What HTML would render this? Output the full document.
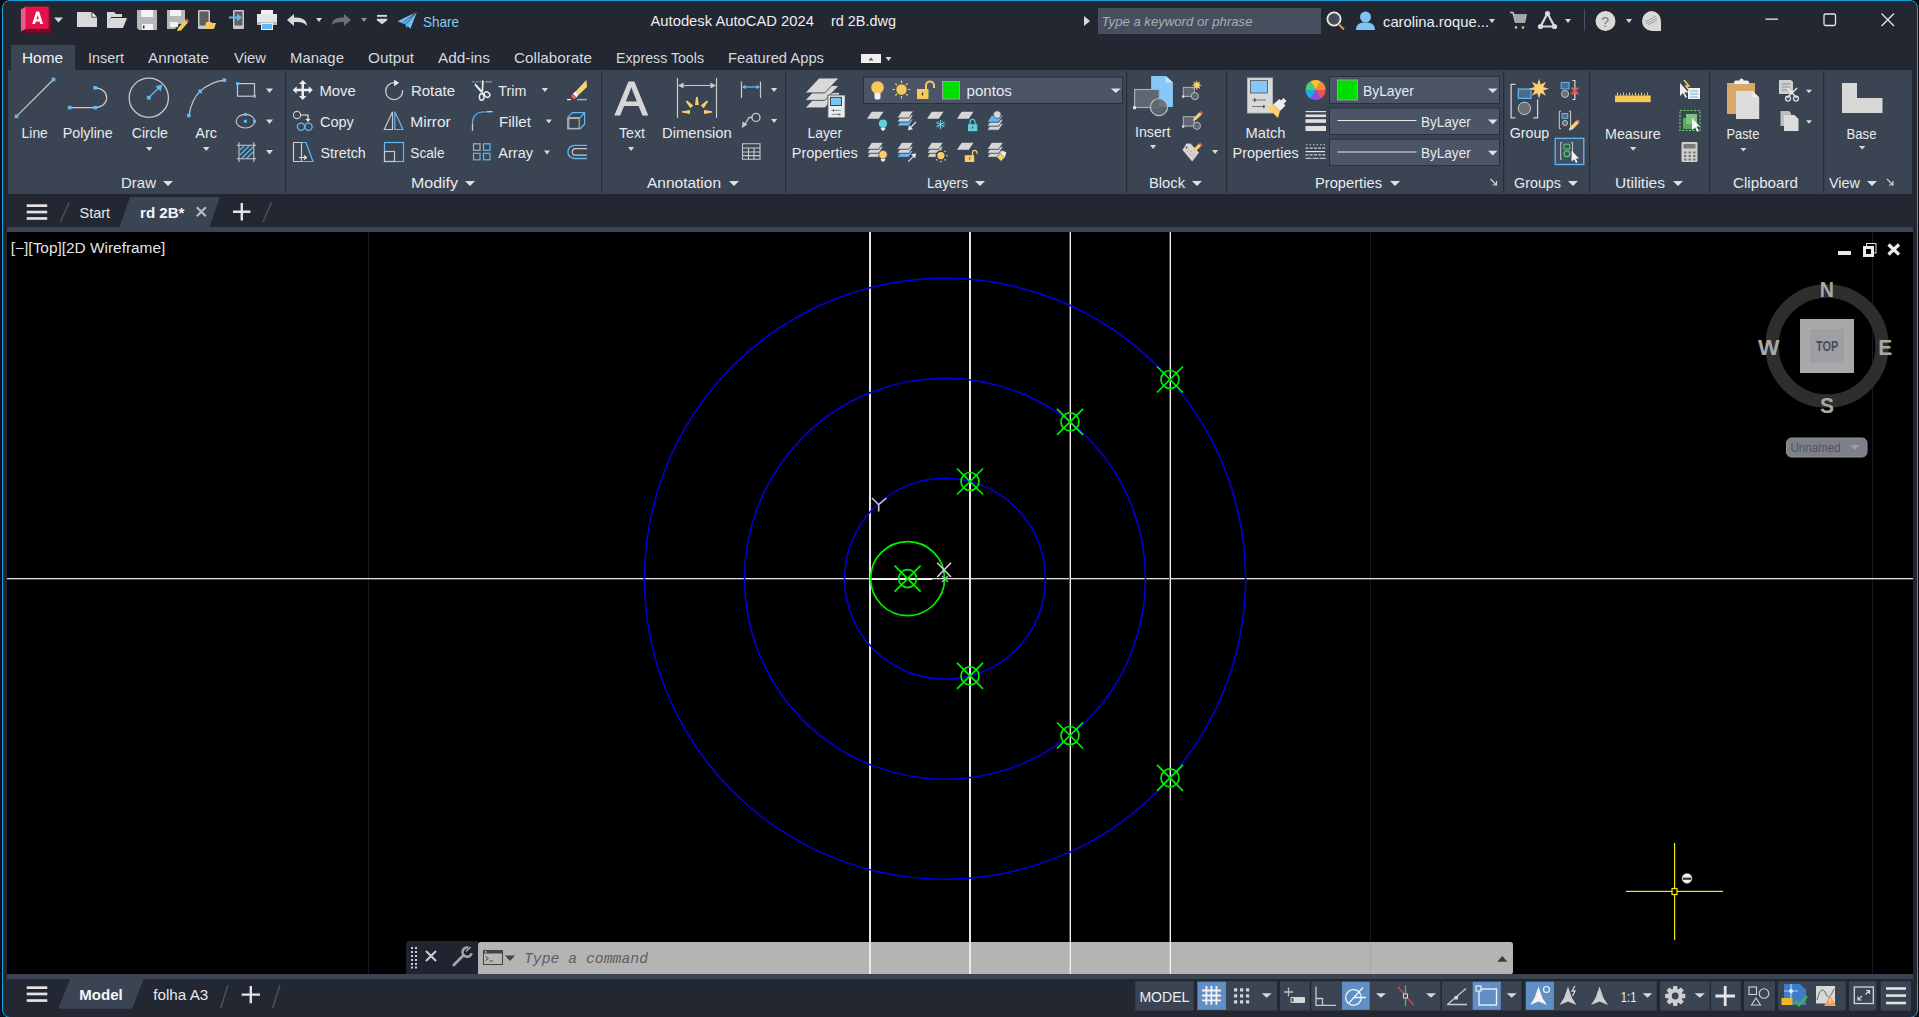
<!DOCTYPE html>
<html><head><meta charset="utf-8">
<style>
*{margin:0;padding:0;box-sizing:border-box}
html,body{width:1919px;height:1017px;overflow:hidden;background:#0b0f16;font-family:"Liberation Sans",sans-serif;}
.a{position:absolute}
.t{position:absolute;white-space:nowrap;color:#e6e9ee;font-size:14.5px;line-height:1}
.rb{position:absolute;background:#3b4453}
.vc{font-size:20px;font-weight:bold;color:#a6a6a6}
svg{position:absolute;left:0;top:0}
</style></head><body>

<div class="a" style="left:2px;top:0;width:1916px;height:1018px;background:#222731;border:1px solid #1b9ee0;border-radius:8px"></div>
<div class="rb" style="left:11px;top:45px;width:64px;height:26px"></div>
<div class="rb" style="left:8px;top:70px;width:1904px;height:124px"></div>
<div class="rb" style="left:7px;top:227px;width:1906px;height:5px"></div>
<div class="a" style="left:7px;top:232px;width:1906px;height:742px;background:#000"></div>
<div class="rb" style="left:7px;top:974px;width:1906px;height:5px"></div>

<!-- drawing -->
<svg class="a" style="left:0;top:0" width="1919" height="1017">
<defs><clipPath id="vp"><rect x="7" y="232" width="1906" height="742"/></clipPath></defs>
<g clip-path="url(#vp)">
<rect x="368" y="232" width="1" height="742" fill="#161a21"/>
<rect x="1370" y="232" width="1" height="742" fill="#161a21"/>
<rect x="1872" y="232" width="1" height="742" fill="#161a21"/>
<rect x="7" y="578" width="1906" height="1" fill="#dcdcdc"/>
<rect x="7" y="579" width="1906" height="1" fill="#4a4a4a"/>
<rect x="870" y="578" width="62" height="2" fill="#f0f0f0"/>
<rect x="869" y="232" width="2" height="742" fill="#e6e6e6"/>
<rect x="969" y="232" width="2" height="742" fill="#e6e6e6"/>
<rect x="1069" y="232" width="1" height="742" fill="#5a5a5a"/><rect x="1070" y="232" width="1" height="742" fill="#ececec"/>
<rect x="1169" y="232" width="1" height="742" fill="#5a5a5a"/><rect x="1170" y="232" width="1" height="742" fill="#ececec"/>
<circle cx="945" cy="578.7" r="100.4" fill="none" stroke="#0000e4" stroke-width="1.5"/>
<circle cx="945" cy="578.7" r="200.5" fill="none" stroke="#0000e4" stroke-width="1.5"/>
<circle cx="945" cy="578.7" r="300.5" fill="none" stroke="#0000e4" stroke-width="1.5"/>
<circle cx="907.6" cy="578.6" r="37" fill="none" stroke="#00f000" stroke-width="1.7"/>
<circle cx="907.6" cy="578.6" r="9" fill="none" stroke="#00f000" stroke-width="1.7"/>
<path d="M894.6 565.6L920.6 591.6M894.6 591.6L920.6 565.6" stroke="#00f000" stroke-width="1.7"/>
<circle cx="970.0" cy="481.5" r="9" fill="none" stroke="#00f000" stroke-width="1.7"/>
<path d="M957.0 468.5L983.0 494.5M957.0 494.5L983.0 468.5" stroke="#00f000" stroke-width="1.7"/>
<circle cx="970.0" cy="675.9" r="9" fill="none" stroke="#00f000" stroke-width="1.7"/>
<path d="M957.0 662.9L983.0 688.9M957.0 688.9L983.0 662.9" stroke="#00f000" stroke-width="1.7"/>
<circle cx="1070.0" cy="421.9" r="9" fill="none" stroke="#00f000" stroke-width="1.7"/>
<path d="M1057.0 408.9L1083.0 434.9M1057.0 434.9L1083.0 408.9" stroke="#00f000" stroke-width="1.7"/>
<circle cx="1070.0" cy="735.5" r="9" fill="none" stroke="#00f000" stroke-width="1.7"/>
<path d="M1057.0 722.5L1083.0 748.5M1057.0 748.5L1083.0 722.5" stroke="#00f000" stroke-width="1.7"/>
<circle cx="1170.0" cy="379.5" r="9" fill="none" stroke="#00f000" stroke-width="1.7"/>
<path d="M1157.0 366.5L1183.0 392.5M1157.0 392.5L1183.0 366.5" stroke="#00f000" stroke-width="1.7"/>
<circle cx="1170.0" cy="777.9" r="9" fill="none" stroke="#00f000" stroke-width="1.7"/>
<path d="M1157.0 764.9L1183.0 790.9M1157.0 790.9L1183.0 764.9" stroke="#00f000" stroke-width="1.7"/>
<path d="M872 498L878.7 504.7L886.5 498M878.7 504.7V511.6" stroke="#c4c4c4" stroke-width="1.6" fill="none"/>
<path d="M937.2 562.8L951 577M951 562.8L937.2 577" stroke="#d4d4d4" stroke-width="1.6" fill="none"/>
<path d="M942 576L948 582M948 576L942 582" stroke="#8fd08f" stroke-width="1.2" fill="none"/>
<rect x="1626" y="890.8" width="97" height="1.2" fill="#f0f000"/>
<rect x="1674" y="843" width="1.2" height="97" fill="#f0f000"/>
<rect x="1672" y="888.5" width="5" height="6" fill="#000" stroke="#f0f000" stroke-width="1.2"/>
<circle cx="1687" cy="878.4" r="5" fill="#f4f4f4" stroke="#888" stroke-width="0.6"/>
<rect x="1683" y="877.6" width="8" height="2.2" fill="#333"/>
<rect x="1838" y="251" width="13" height="4" fill="#e8e8e8"/>
<rect x="1866.5" y="243.5" width="9.5" height="9.5" fill="none" stroke="#e0e0e0" stroke-width="1"/>
<rect x="1864.5" y="247.5" width="8" height="8" fill="#000" stroke="#ececec" stroke-width="3"/>
<path d="M1888.5 244.5L1899 254.5M1899 244.5L1888.5 254.5" stroke="#ececec" stroke-width="3.2"/>
<circle cx="1827" cy="346" r="55" fill="none" stroke="#2e2e2e" stroke-width="13.4"/>
<rect x="1800" y="319" width="54" height="54" fill="#a9a9a9"/>
<rect x="1810" y="329" width="34" height="34" fill="#9d9fa4"/>
</g>
</svg>

<svg width="1919" height="1017">
<path d="M20.9 9.4L25.8 6.6V28.9L20.9 31.6Z" fill="#ea5c88"/>
<path d="M23.9 32.7L25.8 28.9H48.7V11.2H50.9V32.7Z" fill="#7a0a28"/>
<rect x="25.8" y="6.6" width="22.9" height="22.3" fill="#e5104c"/>
<path d="M32.2 24.1L36.2 11.5H39.1L43.1 24.1H40.2L39.5 21.6H35.8L35.1 24.1ZM36.5 19.2H38.8L37.65 15.1Z" fill="#fff"/>
<path d="M54 17.5h9l-4.5 5z" fill="#d9d9d9"/>
<path d="M77 12H91.5V17.5H97V27H77Z" fill="#d9d9d9"/><path d="M92.3 12.2L96.8 16.7H92.3Z" fill="#f4f4f4"/>
<path d="M107 12H114L116 14H122V17H111L108 28H107Z" fill="#d9d9d9"/><path d="M111 18H127L123 28H107Z" fill="#d9d9d9"/>
<path d="M137 10H157V30H139L137 28Z" fill="#b8b8b8"/><rect x="141" y="10" width="12" height="7" fill="#f2f2f2"/><rect x="142" y="24" width="11" height="6" fill="#f2f2f2"/><rect x="143" y="25.5" width="1.5" height="3" fill="#333"/>
<path d="M167 10H185V24H179L175 29H167Z" fill="#b8b8b8"/><rect x="170" y="10" width="11" height="6" fill="#f2f2f2"/><rect x="170" y="22" width="8" height="5" fill="#f2f2f2"/>
<path d="M178 28L185 20L188 22.5L181 30.5L177 31Z" fill="#f6c95c"/><path d="M185 20L186.5 18.5L189 21L188 22.5Z" fill="#e25c5c"/>
<rect x="198" y="10" width="12" height="19" rx="1" fill="#c8c8c8"/><rect x="199.5" y="11.5" width="9" height="14" fill="#5f5f5f"/>
<path d="M206 22H211L212 23H216L214 29H205Z" fill="#f6c95c"/>
<rect x="233" y="10" width="11" height="19" rx="1" fill="#c8c8c8"/><rect x="234.5" y="11.5" width="8" height="14" fill="#5f5f5f"/>
<path d="M229 16.5H237V13.5L242 17.5L237 21.5V18.5H229Z" fill="#62b8f2"/>
<rect x="261" y="10" width="12" height="5" fill="#f0f0f0"/><path d="M257 14H277V25H257Z" fill="#e6e6e6"/><rect x="257" y="22" width="20" height="3" fill="#bdbdbd"/>
<rect x="261" y="23" width="12" height="7" fill="#f0f0f0"/><rect x="262" y="24" width="10" height="5" fill="#62b8f2"/>
<path d="M287 20L294 14V17.5C301 17.5 307 19 307 26C304 22 300 22 294 22V26Z" fill="#d9d9d9"/>
<path d="M316 18h6l-3.0 4z" fill="#d9d9d9"/>
<path d="M351 20L344 14V17.5C337 17.5 332 19 332 25C335 22 339 22 344 22V26Z" fill="#6b6f78"/>
<path d="M361 18h6l-3.0 4z" fill="#8b8f96"/>
<rect x="377" y="14.9" width="10" height="1.9" fill="#d9d9d9"/><path d="M376.8 18.8H387.2V20.3L382 24.2L376.8 20.3Z" fill="#d9d9d9"/>
<path d="M397.5 21.2L417 11.8L410.5 28.8L405.3 24.3Z" fill="#6cc0f4"/><path d="M405.3 24.3L417 11.8L406.5 28Z" fill="#5fb2ea"/><path d="M403 22.5L417 11.8M405.3 24.3L417 11.8" stroke="#222731" stroke-width="0.7"/>
<path d="M1084 16V26L1090 21Z" fill="#d8d8d8"/>
<rect x="1098" y="8" width="223" height="26" fill="#474f5f"/>
<circle cx="1334" cy="19" r="6.6" fill="#474d57" stroke="#ececec" stroke-width="1.8"/><path d="M1338.5 24L1344 29.5" stroke="#d29a5a" stroke-width="2"/>
<circle cx="1365.5" cy="17" r="5.5" fill="#7cc4f4"/><path d="M1356 30C1356 24 1360 22.5 1365.5 22.5C1371 22.5 1375 24 1375 30Z" fill="#7cc4f4"/>
<path d="M1489 19h6l-3.0 4z" fill="#d9d9d9"/>
<path d="M1510 12.5H1513L1515.5 22H1524.5L1526 15H1514" fill="none" stroke="#c9c9c9" stroke-width="1.5"/><path d="M1514 15H1526L1524.5 22H1515.5Z" fill="#a6a6a6"/><circle cx="1516" cy="27.5" r="1.3" fill="#c9c9c9"/><circle cx="1523" cy="27.5" r="1.3" fill="#c9c9c9"/>
<path d="M1547.5 13.5L1540.5 26.5H1554.5Z" fill="none" stroke="#d9d9d9" stroke-width="2.2"/><circle cx="1547.5" cy="13.5" r="2.6" fill="#d9d9d9"/><circle cx="1540.5" cy="26.5" r="2.6" fill="#d9d9d9"/><circle cx="1554.5" cy="26.5" r="2.6" fill="#d9d9d9"/>
<path d="M1565 19h6l-3.0 4z" fill="#d9d9d9"/>
<rect x="1584" y="9" width="1" height="22" fill="#4a5260"/>
<circle cx="1605.5" cy="21" r="10" fill="#d9d9d9"/><text x="1601.2" y="26.5" font-size="14" font-family="Liberation Sans" fill="#7b7e84">?</text>
<path d="M1626 19h6l-3.0 4z" fill="#d9d9d9"/>
<path d="M1652 11A10 10 0 1 0 1652 31H1661V21A10 10 0 0 0 1652 11Z" fill="#d9d9d9"/><path d="M1645 22L1656 16M1646 24L1657 18M1648 25L1657 20" stroke="#9a9a9a" stroke-width="0.9"/>
<rect x="1765.5" y="18.5" width="12.5" height="1.3" fill="#e8e8e8"/>
<rect x="1824" y="14" width="11.5" height="11.5" rx="1.5" fill="none" stroke="#e8e8e8" stroke-width="1.3"/>
<path d="M1881.5 13.5L1894 26M1894 13.5L1881.5 26" stroke="#e8e8e8" stroke-width="1.3"/>
<rect x="861" y="54" width="20" height="9" fill="#f0f0f0"/><path d="M868.5 60.5L871 57.5L873.5 60.5Z" fill="#555"/>
<path d="M885.5 57h6l-3.0 4z" fill="#d9d9d9"/>
<rect x="285" y="71" width="1.2" height="122" fill="#272d37"/>
<rect x="601" y="71" width="1.2" height="122" fill="#272d37"/>
<rect x="785" y="71" width="1.2" height="122" fill="#272d37"/>
<rect x="1126" y="71" width="1.2" height="122" fill="#272d37"/>
<rect x="1226" y="71" width="1.2" height="122" fill="#272d37"/>
<rect x="1503" y="71" width="1.2" height="122" fill="#272d37"/>
<rect x="1589" y="71" width="1.2" height="122" fill="#272d37"/>
<rect x="1709" y="71" width="1.2" height="122" fill="#272d37"/>
<rect x="1823" y="71" width="1.2" height="122" fill="#272d37"/>
<path d="M163 181h10l-5.0 5z" fill="#dfe1e5"/>
<path d="M465 181h10l-5.0 5z" fill="#dfe1e5"/>
<path d="M729 181h10l-5.0 5z" fill="#dfe1e5"/>
<path d="M975 181h10l-5.0 5z" fill="#dfe1e5"/>
<path d="M1192 181h10l-5.0 5z" fill="#dfe1e5"/>
<path d="M1390 181h10l-5.0 5z" fill="#dfe1e5"/>
<path d="M1568 181h10l-5.0 5z" fill="#dfe1e5"/>
<path d="M1673 181h10l-5.0 5z" fill="#dfe1e5"/>
<path d="M1867 181h10l-5.0 5z" fill="#dfe1e5"/>
<path d="M1490.5 179L1496.5 185M1496.5 181V185H1492.5" stroke="#cfd2d6" stroke-width="1.2" fill="none"/>
<path d="M1887 179L1893 185M1893 181V185H1889" stroke="#cfd2d6" stroke-width="1.2" fill="none"/>
<path d="M16.5 116.4L53.5 79.5" stroke="#c9c9c9" stroke-width="1.2"/><rect x="14.70" y="114.60" width="3.6" height="3.6" fill="#62b8f2"/><rect x="51.70" y="77.70" width="3.6" height="3.6" fill="#62b8f2"/>
<path d="M69.6 107.6H95.2M95.2 87.8A11.5 9.9 0 0 1 95.2 107.6" stroke="#c9c9c9" stroke-width="1.2" fill="none"/><rect x="67.80" y="105.80" width="3.6" height="3.6" fill="#62b8f2"/><rect x="93.40" y="105.80" width="3.6" height="3.6" fill="#62b8f2"/><rect x="93.40" y="86.00" width="3.6" height="3.6" fill="#62b8f2"/>
<circle cx="148.8" cy="97.7" r="19.6" fill="none" stroke="#c9c9c9" stroke-width="1.3"/><path d="M148.8 97.7L159 87.5" stroke="#62b8f2" stroke-width="1.3"/><path d="M162.3 84.6L155.5 86.2L160.7 91.4Z" fill="#62b8f2"/><rect x="147.00" y="95.90" width="3.6" height="3.6" fill="#62b8f2"/>
<path d="M146 147h6.5l-3.25 4z" fill="#d9d9d9"/>
<path d="M188.9 115.5C191 104 195 96 200.1 91.4C206 86 214 81.5 224.4 80.2" stroke="#c9c9c9" stroke-width="1.2" fill="none"/><rect x="187.10" y="113.70" width="3.6" height="3.6" fill="#62b8f2"/><rect x="198.30" y="89.60" width="3.6" height="3.6" fill="#62b8f2"/><rect x="222.60" y="78.40" width="3.6" height="3.6" fill="#62b8f2"/>
<path d="M203 147h6.5l-3.25 4z" fill="#d9d9d9"/>
<rect x="237.5" y="83.6" width="17" height="12.6" fill="none" stroke="#c9c9c9" stroke-width="1.2"/><rect x="236.00" y="82.10" width="3" height="3" fill="#62b8f2"/><rect x="253.00" y="94.70" width="3" height="3" fill="#62b8f2"/>
<path d="M266 88.5h7l-3.5 4.5z" fill="#d9d9d9"/>
<ellipse cx="245.4" cy="121.2" rx="9.2" ry="6.8" fill="none" stroke="#c9c9c9" stroke-width="1.2"/><rect x="243.90" y="119.70" width="3" height="3" fill="#62b8f2"/><rect x="243.90" y="112.90" width="3" height="3" fill="#62b8f2"/><rect x="253.10" y="119.70" width="3" height="3" fill="#62b8f2"/>
<path d="M266 119.5h7l-3.5 4.5z" fill="#d9d9d9"/>
<path d="M236.8 145.2H256M236.8 158.8H256M239 142.2V162M253.8 142.2V162" stroke="#c9c9c9" stroke-width="1.1"/><path d="M240 150L245 145M240 155L250 145M242 158L253 147M247 158L253 152" stroke="#62b8f2" stroke-width="1.3"/>
<path d="M266 150h7l-3.5 4.5z" fill="#d9d9d9"/>
<path d="M302.75 80L306.5 84H304V88.8H308.8V86.2L312.75 90L308.8 93.8V91.2H304V96H306.5L302.75 100L299 96H301.5V91.2H296.7V93.8L292.75 90L296.7 86.2V88.8H301.5V84H299Z" fill="#ececec"/>
<path d="M402.6 90A8.5 8.5 0 1 1 394.2 82.6" stroke="#c9c9c9" stroke-width="1.3" fill="none"/><path d="M394 79.8L399.2 82.8L394.2 86.2Z" fill="#ececec"/>
<path d="M472 81.8H474.5M475.8 81.8H478.3M479.5 81.8H481" stroke="#4f95cc" stroke-width="1.6"/><path d="M485 81.8H492" stroke="#8a8f98" stroke-width="1.4"/><path d="M482 80L483.8 81L483.2 91.6L481.6 92Z" fill="#ececec"/><path d="M475 83L482.5 91L481 92.8L474.8 85.5Z" fill="#ececec"/><ellipse cx="481.7" cy="97" rx="2.3" ry="3.2" fill="none" stroke="#ececec" stroke-width="1.5"/><ellipse cx="487" cy="94.6" rx="3" ry="2.4" transform="rotate(35 487 94.6)" fill="none" stroke="#ececec" stroke-width="1.5"/><path d="M482 92L484 96" stroke="#ececec" stroke-width="1.6"/>
<path d="M541.7 88h6.3l-3.15 4z" fill="#d9d9d9"/>
<path d="M586.4 79.9L587 87L578.5 95L575.5 91.4Z" fill="#fbd47a"/><path d="M575.5 91.4L578.5 95L576.3 97.4L573 93.6Z" fill="#fff"/><path d="M573 93.6L576.3 97.4L574 99.4L571 96.2Z" fill="#f46060"/><path d="M567 99.6H571" stroke="#e8e8e8" stroke-width="1.4"/><path d="M577 99.6H587" stroke="#6cc0f6" stroke-width="1.4"/>
<circle cx="297" cy="115" r="3.6" fill="none" stroke="#c9c9c9" stroke-width="1.2"/><path d="M301 115H308V120" stroke="#ececec" stroke-width="1.2" fill="none"/><path d="M305.5 119H310.5L308 122Z" fill="#ececec"/><circle cx="301" cy="126.8" r="3.6" fill="none" stroke="#62b8f2" stroke-width="1.3"/><circle cx="308.5" cy="126.8" r="3.6" fill="none" stroke="#62b8f2" stroke-width="1.3"/>
<path d="M392.5 111.7V129.5H384.3Z" fill="none" stroke="#c9c9c9" stroke-width="1.2"/><path d="M394.8 111.7V129.5H403Z" fill="none" stroke="#62b8f2" stroke-width="1.2"/>
<path d="M472.5 130.7V122A10 10 0 0 1 482 112H492.5" stroke="#62b8f2" stroke-width="1.2" fill="none"/><path d="M472.5 130.7V124M487 111.5H492.5" stroke="#c9c9c9" stroke-width="1.2"/>
<path d="M545.8 119.5h6l-3.0 4z" fill="#d9d9d9"/>
<path d="M567.6 117.6L572.2 112.6H584.6L580 117.6ZM580 117.6L584.6 112.6V124L580 129" stroke="#62b8f2" stroke-width="1.2" fill="none" stroke-linejoin="round"/><path d="M567.6 117.6V129H580" stroke="#62b8f2" stroke-width="1.2" fill="none"/><rect x="568.8" y="118.4" width="10.4" height="10" fill="none" stroke="#b8b8b8" stroke-width="1.1"/>
<path d="M293.5 142.5H301.5V161.5H293.5Z" stroke="#c9c9c9" stroke-width="1.2" fill="none"/><path d="M301.5 142.5H306L313 161.5H301.5" stroke="#62b8f2" stroke-width="1.2" fill="none"/><path d="M299 157.5H306M304 155.5L306.5 157.5L304 159.5" stroke="#ececec" stroke-width="1.1" fill="none"/>
<rect x="384.5" y="142.5" width="19" height="19" fill="none" stroke="#62b8f2" stroke-width="1.2"/><rect x="384.5" y="151.5" width="10" height="10" fill="none" stroke="#c9c9c9" stroke-width="1.2"/>
<rect x="473.5" y="143.8" width="6.5" height="6.5" fill="none" stroke="#b0b0b0" stroke-width="1.2"/><rect x="483.5" y="143.8" width="6.5" height="6.5" fill="none" stroke="#62b8f2" stroke-width="1.2"/><rect x="473.5" y="153.3" width="6.5" height="6.5" fill="none" stroke="#62b8f2" stroke-width="1.2"/><rect x="483.5" y="153.3" width="6.5" height="6.5" fill="none" stroke="#62b8f2" stroke-width="1.2"/>
<path d="M544 150.5h6l-3.0 4z" fill="#d9d9d9"/>
<path d="M587 145.3H574.5A6.6 6.6 0 0 0 574.5 158.5H587" stroke="#62b8f2" stroke-width="1.3" fill="none"/><path d="M587 148.6H575.6A3.3 3.3 0 0 0 575.6 155.2H587" stroke="#c8c8c8" stroke-width="1.2" fill="none"/>
<text x="615" y="115.3" font-size="48.7" font-family="Liberation Sans" fill="#d6d6d6" stroke="#d6d6d6" stroke-width="1" textLength="32.6" lengthAdjust="spacingAndGlyphs">A</text>
<path d="M628 147h6.2l-3.1 4z" fill="#d9d9d9"/>
<path d="M677.5 78V118M716.5 78V118M680 85.5H714" stroke="#c9c9c9" stroke-width="1.2" fill="none"/><path d="M678 85.5L683.5 82.5V88.5ZM716 85.5L710.5 82.5V88.5Z" fill="#c9c9c9"/>
<path d="M696 96.9H697.8L698.8 105H695Z M685.8 101.6L687.2 100.6L693.2 105.6L690.4 108.2Z M708.2 101.6L706.8 100.6L700.8 105.6L703.6 108.2Z M681.8 111.3V112.6L690 113.9V110Z M712.2 111.3V112.6L704 113.9V110Z" fill="#f8cd66"/>
<path d="M741.5 81.5V98M760.5 81.5V98" stroke="#c9c9c9" stroke-width="1.2"/><path d="M743 87H759" stroke="#62b8f2" stroke-width="1.3"/><path d="M742 87L745.5 84.8V89.2ZM760 87L756.5 84.8V89.2Z" fill="#62b8f2"/>
<path d="M771 88h6.2l-3.1 4z" fill="#d9d9d9"/>
<circle cx="756" cy="117.4" r="4" fill="none" stroke="#c9c9c9" stroke-width="1.3"/><path d="M752 117.5H749L744.5 125" stroke="#c9c9c9" stroke-width="1.3" fill="none"/><path d="M741.8 128L742.5 121.5L747.5 124.5Z" fill="#c9c9c9"/>
<path d="M771 119h6.2l-3.1 4z" fill="#d9d9d9"/>
<path d="M742.5 143.8H760V159.2H742.5ZM742.5 148H760M742.5 152H760M742.5 155.6H760M748.5 148V159.2M754 148V159.2" stroke="#c9c9c9" stroke-width="1.1" fill="none"/>
<path d="M819.1 93H839L824.8 107.9H805Z" fill="#d9d9d9" stroke="#3b4453" stroke-width="0.9"/>
<path d="M819.1 85.5H839L824.8 100.4H805Z" fill="#d9d9d9" stroke="#3b4453" stroke-width="0.9"/>
<path d="M819.1 78H839L824.8 92.9H805Z" fill="#d9d9d9" stroke="#3b4453" stroke-width="0.9"/>
<rect x="833" y="92.9" width="6" height="2.5" fill="#d9d9d9"/><rect x="827.9" y="95" width="17.2" height="22.9" fill="#ececec" stroke="#3b4453" stroke-width="0.8"/><rect x="830.4" y="97.3" width="11" height="8.2" fill="#78c4f8" stroke="#2a3038" stroke-width="0.9"/><path d="M831.5 110.4H841M831.5 114.4H841" stroke="#777" stroke-width="0.8"/><rect x="833" y="109.3" width="1" height="2.2" fill="#555"/><rect x="838.5" y="113.3" width="1" height="2.2" fill="#555"/>
<rect x="863.5" y="77.0" width="259" height="26.5" fill="#4b5567" stroke="#2a303a" stroke-width="1"/>
<circle cx="877.5" cy="87.5" r="6.3" fill="#f6c95c"/><path d="M874.5 93H880.5V97.5A3 2 0 0 1 874.5 97.5Z" fill="#f0f0f0"/>
<circle cx="901.5" cy="89.5" r="5.2" fill="#f6c95c"/><path d="M901.5 80.5V83M901.5 96V98.5M892.5 89.5H895M908 89.5H910.5M895.3 83.3L897 85M906 94L907.7 95.7M907.7 83.3L906 85M897 94L895.3 95.7" stroke="#f6c95c" stroke-width="1.2"/>
<rect x="917" y="89" width="11.5" height="10" fill="#f6c95c"/><path d="M926 89V85.5A4 4 0 0 1 934 85.5V88" stroke="#f6c95c" stroke-width="2" fill="none"/><rect x="921.8" y="92.5" width="1.4" height="3" fill="#3b4453"/>
<rect x="942.5" y="81.5" width="17" height="17.5" fill="#00e000" stroke="#9aa0a8" stroke-width="1"/>
<path d="M1110.8 88.5h10l-5.0 4.6z" fill="#dfe1e5"/>
<path d="M871.70 111.80H883.50L878.80 118.80H867.00Z" fill="#d6d6d6"/>
<circle cx="883" cy="123.5" r="4.1" fill="#5fd0dc"/><path d="M880.8 127.5H885.2V129.2L883 131L880.8 129.2Z" fill="#eeeeee"/>
<path d="M901.70 119.00H913.50L908.80 126.00H897.00Z" fill="#62b8f2" stroke="#3b4453" stroke-width="0.9"/><path d="M901.70 115.00H913.50L908.80 122.00H897.00Z" fill="#d6d6d6" stroke="#3b4453" stroke-width="0.9"/><path d="M901.70 111.00H913.50L908.80 118.00H897.00Z" fill="#d6d6d6" stroke="#3b4453" stroke-width="0.9"/>
<path d="M916 122L909.5 128.5" stroke="#e8e8e8" stroke-width="1.1"/><path d="M908 130.3L909 125.2L913 129.2Z" fill="#e8e8e8"/>
<path d="M931.70 111.80H943.50L938.80 118.80H927.00Z" fill="#d6d6d6"/>
<path d="M940.5 120V129M936.6 122.2L944.4 126.8M944.4 122.2L936.6 126.8" stroke="#5fd0dc" stroke-width="1.1"/><circle cx="940.5" cy="124.5" r="3.6" fill="none" stroke="#5fd0dc" stroke-width="0.8" stroke-dasharray="1 1.3"/>
<path d="M961.70 111.80H973.50L968.80 118.80H957.00Z" fill="#d6d6d6"/>
<rect x="968" y="124.2" width="9.3" height="7" fill="#5fd0dc"/><path d="M970.2 124.5V121.8A2.4 2.4 0 0 1 975 121.8V124.5" stroke="#5fd0dc" stroke-width="1.2" fill="none"/><rect x="972.2" y="126.2" width="0.9" height="2.5" fill="#3b4453"/>
<path d="M991.70 123.20H1003.50L998.80 130.20H987.00Z" fill="#d6d6d6" stroke="#3b4453" stroke-width="0.9"/><path d="M991.70 119.20H1003.50L998.80 126.20H987.00Z" fill="#d6d6d6" stroke="#3b4453" stroke-width="0.9"/><path d="M991.70 115.20H1003.50L998.80 122.20H987.00Z" fill="#62b8f2" stroke="#3b4453" stroke-width="0.9"/><circle cx="997.2" cy="114.6" r="3.9" fill="#d6d6d6" stroke="#3b4453" stroke-width="0.8"/>
<path d="M871.70 150.30H883.50L878.80 157.30H867.00Z" fill="#d6d6d6" stroke="#3b4453" stroke-width="0.9"/><path d="M871.70 146.30H883.50L878.80 153.30H867.00Z" fill="#d6d6d6" stroke="#3b4453" stroke-width="0.9"/><path d="M871.70 142.30H883.50L878.80 149.30H867.00Z" fill="#d6d6d6" stroke="#3b4453" stroke-width="0.9"/>
<circle cx="883" cy="154.6" r="4.3" fill="#f8cd6a" stroke="#3b4453" stroke-width="0.8"/><path d="M880.8 158.8H885.2V160.3L883 162L880.8 160.3Z" fill="#eeeeee"/>
<path d="M901.70 150.30H913.50L908.80 157.30H897.00Z" fill="#62b8f2" stroke="#3b4453" stroke-width="0.9"/><path d="M901.70 146.30H913.50L908.80 153.30H897.00Z" fill="#d6d6d6" stroke="#3b4453" stroke-width="0.9"/><path d="M901.70 142.30H913.50L908.80 149.30H897.00Z" fill="#d6d6d6" stroke="#3b4453" stroke-width="0.9"/>
<path d="M908.2 161.6L914.5 155.3" stroke="#e8e8e8" stroke-width="1.1"/><path d="M916 153.3L915.2 158.6L911 154.3Z" fill="#e8e8e8"/>
<path d="M931.70 150.30H943.50L938.80 157.30H927.00Z" fill="#d6d6d6" stroke="#3b4453" stroke-width="0.9"/><path d="M931.70 146.30H943.50L938.80 153.30H927.00Z" fill="#d6d6d6" stroke="#3b4453" stroke-width="0.9"/><path d="M931.70 142.30H943.50L938.80 149.30H927.00Z" fill="#d6d6d6" stroke="#3b4453" stroke-width="0.9"/>
<circle cx="940.9" cy="155.6" r="5.5" fill="#3b4453"/><circle cx="940.9" cy="155.6" r="3.6" fill="#f8cd6a"/><rect x="946.90" y="155.60" width="1.4" height="1.4" transform="translate(-0.7 -0.7)" fill="#f8cd6a"/><rect x="945.14" y="159.84" width="1.4" height="1.4" transform="translate(-0.7 -0.7)" fill="#f8cd6a"/><rect x="940.90" y="161.60" width="1.4" height="1.4" transform="translate(-0.7 -0.7)" fill="#f8cd6a"/><rect x="936.66" y="159.84" width="1.4" height="1.4" transform="translate(-0.7 -0.7)" fill="#f8cd6a"/><rect x="934.90" y="155.60" width="1.4" height="1.4" transform="translate(-0.7 -0.7)" fill="#f8cd6a"/><rect x="936.66" y="151.36" width="1.4" height="1.4" transform="translate(-0.7 -0.7)" fill="#f8cd6a"/><rect x="940.90" y="149.60" width="1.4" height="1.4" transform="translate(-0.7 -0.7)" fill="#f8cd6a"/><rect x="945.14" y="151.36" width="1.4" height="1.4" transform="translate(-0.7 -0.7)" fill="#f8cd6a"/>
<path d="M961.70 142.70H973.50L968.80 149.70H957.00Z" fill="#d6d6d6"/>
<rect x="964.8" y="155.2" width="9.4" height="6.8" fill="#f8cd6a"/><path d="M972.5 155.5V152.6A2.2 2.2 0 0 1 976.9 152.6V154" stroke="#f8cd6a" stroke-width="1.2" fill="none"/><rect x="969.2" y="157.2" width="0.9" height="2.5" fill="#3b4453"/>
<path d="M991.70 150.30H1003.50L998.80 157.30H987.00Z" fill="#d6d6d6" stroke="#3b4453" stroke-width="0.9"/><path d="M991.70 146.30H1003.50L998.80 153.30H987.00Z" fill="#d6d6d6" stroke="#3b4453" stroke-width="0.9"/><path d="M991.70 142.30H1003.50L998.80 149.30H987.00Z" fill="#d6d6d6" stroke="#3b4453" stroke-width="0.9"/>
<path d="M996.6 157L1000.5 153.2L1004.8 157.5L1001 161.4Z" fill="#f8cd6a" stroke="#3b4453" stroke-width="0.6"/><path d="M1000.5 153.2L1003 150.7L1006.3 152.6L1004.8 157.5Z" fill="#eeeeee"/>
<path d="M1151.1 76H1165.8L1172.9 82.4V107H1151.1Z" fill="#86c8f8"/><path d="M1165.8 76V82.4H1172.9Z" fill="#c8e4f8"/>
<rect x="1134.6" y="89.5" width="24.6" height="18" fill="#5f6672" stroke="#a8acb2" stroke-width="1.2"/><circle cx="1159" cy="107.1" r="8.6" fill="#5f6672" fill-opacity="0.85" stroke="#b8bcc2" stroke-width="1.2"/><rect x="1133" y="106.2" width="3" height="3" fill="#e0e0e0"/>
<path d="M1150 145h6.2l-3.1 4z" fill="#d9d9d9"/>
<rect x="1183.3" y="87.4" width="11" height="9" fill="#5f6672" stroke="#b0b4ba" stroke-width="1"/><circle cx="1194.9" cy="96.1" r="3.6" fill="#5f6672" stroke="#b8bcc2" stroke-width="1"/><rect x="1182" y="95.5" width="2.2" height="2.2" fill="#e0e0e0"/>
<path d="M1196.80 80.00L1197.72 82.98L1200.48 81.52L1199.02 84.28L1202.00 85.20L1199.02 86.12L1200.48 88.88L1197.72 87.42L1196.80 90.40L1195.88 87.42L1193.12 88.88L1194.58 86.12L1191.60 85.20L1194.58 84.28L1193.12 81.52L1195.88 82.98Z" fill="#fbd070"/>
<rect x="1183.3" y="116.7" width="11" height="9.4" fill="#5f6672" stroke="#b0b4ba" stroke-width="1"/><circle cx="1196.9" cy="125.8" r="3.6" fill="#5f6672" stroke="#b8bcc2" stroke-width="1"/><rect x="1182" y="125.5" width="2.2" height="2.2" fill="#e0e0e0"/>
<path d="M1192.8 121L1194 117.5L1199.5 112.2L1201.8 114.5L1196.3 119.8Z" fill="#fbd070"/><path d="M1199.5 112.2L1200.8 111L1203 113.2L1201.8 114.5Z" fill="#f05858"/>
<path d="M1182.5 150L1186.5 143.6H1190.5L1199 152.5L1192.2 161.4Z" fill="#d6d6d6"/><circle cx="1186.5" cy="147.5" r="1" fill="#555"/><path d="M1187 151L1193 157M1189 149.5L1195 155.5" stroke="#777" stroke-width="0.7" stroke-dasharray="1.2 1"/>
<path d="M1192.2 152.5L1193.4 149L1198.9 143.7L1201.2 146L1195.7 151.3Z" fill="#fbd070"/><path d="M1198.9 143.7L1200.2 142.5L1202.4 144.7L1201.2 146Z" fill="#f05858"/>
<path d="M1212 150h6.2l-3.1 4z" fill="#d9d9d9"/>
<rect x="1247.5" y="78" width="25" height="35" fill="#d9d9d9" stroke="#bdbdbd" stroke-width="0.8"/><rect x="1250.5" y="80.5" width="17" height="12.5" fill="#86c8f8" stroke="#555" stroke-width="0.8"/><path d="M1252 100H1266M1252 106.5H1265" stroke="#777" stroke-width="1"/><rect x="1254" y="98.5" width="1.6" height="3.2" fill="#555"/><rect x="1263" y="105" width="1.6" height="3.2" fill="#555"/>
<path d="M1273 104.5L1279.5 99L1285.5 105.5L1280 111Z" fill="#eeeeee"/><path d="M1280.5 101L1283.5 98L1286.5 101L1283.5 104Z" fill="#eeeeee"/><path d="M1266.5 107L1273 104.5L1280 111L1278 118Z" fill="#fbd070"/>
<path d="M1315.6 90L1310.60 81.34A10 10 0 0 1 1320.60 81.34Z" fill="#fbbf3a"/>
<path d="M1315.6 90L1320.60 81.34A10 10 0 0 1 1325.60 90.00Z" fill="#f98a3a"/>
<path d="M1315.6 90L1325.60 90.00A10 10 0 0 1 1320.60 98.66Z" fill="#e8505a"/>
<path d="M1315.6 90L1320.60 98.66A10 10 0 0 1 1310.60 98.66Z" fill="#8a4ef0"/>
<path d="M1315.6 90L1310.60 98.66A10 10 0 0 1 1305.60 90.00Z" fill="#20a8d8"/>
<path d="M1315.6 90L1305.60 90.00A10 10 0 0 1 1310.60 81.34Z" fill="#50c878"/>
<rect x="1305.5" y="111" width="20.5" height="1.2" fill="#e0e0e0"/><rect x="1305.5" y="114.5" width="20.5" height="2.6" fill="#e0e0e0"/><rect x="1305.5" y="119.2" width="20.5" height="3.6" fill="#e0e0e0"/><rect x="1305.5" y="126" width="20.5" height="5" fill="#e0e0e0"/>
<path d="M1306 144.7H1325" stroke="#cfcfcf" stroke-width="1.1" stroke-dasharray="1.5 2"/><path d="M1305.5 148.2H1325.5" stroke="#cfcfcf" stroke-width="1.3" stroke-dasharray="3 1.2"/><path d="M1305.5 151.6H1325" stroke="#e6e6e6" stroke-width="1.2"/><path d="M1305.5 154.8H1325.5" stroke="#cfcfcf" stroke-width="1.3" stroke-dasharray="3 1.2"/><path d="M1305.5 158.4H1325.5" stroke="#bdbdbd" stroke-width="1.3" stroke-dasharray="6 1"/>
<rect x="1329.5" y="76.5" width="170" height="27" fill="#4b5567" stroke="#2a303a" stroke-width="1"/><rect x="1329.5" y="108.0" width="170" height="26.5" fill="#4b5567" stroke="#2a303a" stroke-width="1"/><rect x="1329.5" y="139.0" width="170" height="26.5" fill="#4b5567" stroke="#2a303a" stroke-width="1"/>
<rect x="1337.5" y="80" width="20" height="20" fill="#00e000" stroke="#9aa0a8" stroke-width="1"/>
<rect x="1337.5" y="120" width="79" height="1" fill="#e8e8e8"/><rect x="1337.5" y="151.5" width="79" height="1" fill="#e8e8e8"/>
<path d="M1488 88.4h9.5l-4.75 4.6z" fill="#dfe1e5"/>
<path d="M1488 119.6h9.5l-4.75 4.6z" fill="#dfe1e5"/>
<path d="M1488 150.8h9.5l-4.75 4.6z" fill="#dfe1e5"/>
<path d="M1515.4 84.3H1511.1V117.8H1515.4M1537.6 99.4V117.8H1533.3" stroke="#d0d0d0" stroke-width="1.3" fill="none"/>
<rect x="1518.2" y="89" width="12.8" height="9.4" fill="#4a6a90" stroke="#62b8f2" stroke-width="1.2"/><circle cx="1524.4" cy="108.4" r="6.2" fill="#6b7078" stroke="#c8c8c8" stroke-width="1"/>
<path d="M1539.00 78.80L1540.76 84.55L1546.07 81.73L1543.25 87.04L1549.00 88.80L1543.25 90.56L1546.07 95.87L1540.76 93.05L1539.00 98.80L1537.24 93.05L1531.93 95.87L1534.75 90.56L1529.00 88.80L1534.75 87.04L1531.93 81.73L1537.24 84.55Z" fill="#fbd070"/>
<path d="M1572.5 80.5H1574.9V99.5H1572.5" stroke="#e0e0e0" stroke-width="1.1" fill="none"/><rect x="1561.2" y="82.4" width="7.8" height="6.4" fill="#4a6a90" stroke="#62b8f2" stroke-width="1"/><circle cx="1565" cy="93.9" r="3.6" fill="#6b7078" stroke="#c8c8c8" stroke-width="0.9"/><path d="M1571.6 87.6L1578.2 94.2M1578.2 87.6L1571.6 94.2" stroke="#f05050" stroke-width="2"/>
<path d="M1561 111.2H1559.3V128.7H1561M1569 111.2H1570.6V128.7H1569" stroke="#d0d0d0" stroke-width="1" fill="none"/><rect x="1562.1" y="113.5" width="5.7" height="4.8" fill="#4a6a90" stroke="#62b8f2" stroke-width="1"/><circle cx="1565" cy="123" r="2.6" fill="#6b7078" stroke="#c8c8c8" stroke-width="0.9"/>
<path d="M1569.2 130.6L1570.5 126.5L1576.5 120.5L1579 123L1573 129Z" fill="#fbd070"/><path d="M1576.5 120.5L1577.8 119.2L1580.3 121.7L1579 123Z" fill="#f05858"/><path d="M1569.2 130.6L1570.5 126.5L1573 129Z" fill="#d8d8d8"/>
<rect x="1555.2" y="138.3" width="28.6" height="26.2" fill="#3f5064" stroke="#62b8f2" stroke-width="1.3"/>
<path d="M1562 142.4H1560.7V159.3H1562M1571.2 142.4H1572.5V159.3H1571.2" stroke="#c8c8c8" stroke-width="1" fill="none"/><rect x="1564" y="144.2" width="5.7" height="4.8" fill="none" stroke="#58d068" stroke-width="1.1"/><circle cx="1566.9" cy="153.7" r="2.9" fill="none" stroke="#58d068" stroke-width="1.2"/><path d="M1571.6 150.5V161.5L1574.2 159.2L1576 163L1577.6 162.2L1575.8 158.5H1579Z" fill="#f2f2f2"/>
<rect x="1615" y="95.5" width="35.7" height="6.7" fill="#f6c95c"/><path d="M1617.5 95.5V92.5M1620.5 95.5V93.5M1623.5 95.5V92.5M1626.5 95.5V93.5M1629.5 95.5V92.5M1632.5 95.5V93.5M1635.5 95.5V92.5M1638.5 95.5V93.5M1641.5 95.5V92.5M1644.5 95.5V93.5M1647.5 95.5V92.5" stroke="#f6c95c" stroke-width="1"/>
<path d="M1630 147h6.4l-3.2 3.8z" fill="#d9d9d9"/>
<path d="M1680 83L1680 96L1683 93L1685.5 98L1687 97L1684.5 92.5H1688.5Z" fill="#eeeeee"/><rect x="1688" y="88" width="12" height="11" fill="#f0f0f0"/><path d="M1690 91H1698M1690 94H1698M1690 97H1698" stroke="#62b8f2" stroke-width="1.1"/><path d="M1684 80L1689 86H1686L1689 90" stroke="#f6c95c" stroke-width="1.5" fill="none"/>
<rect x="1680" y="110.5" width="20" height="20" fill="none" stroke="#6cd06c" stroke-width="1.2" stroke-dasharray="2 1.5"/><rect x="1683" y="118" width="12" height="11" fill="#5aa860"/><rect x="1686" y="114" width="11" height="10" fill="#7cc47c"/><path d="M1692 118V130L1695 127.5L1697.5 132L1699 131L1696.5 126.5H1700Z" fill="#f2f2f2"/>
<rect x="1681.5" y="142" width="16" height="20" rx="1" fill="#cfcfcf"/><rect x="1683.5" y="144" width="12" height="4.5" fill="#7a7a7a"/><path d="M1684 151.5h2.5v2h-2.5zM1688.5 151.5h2.5v2h-2.5zM1693 151.5h2.5v2h-2.5zM1684 155h2.5v2h-2.5zM1688.5 155h2.5v2h-2.5zM1693 155h2.5v2h-2.5zM1684 158.5h2.5v2h-2.5zM1688.5 158.5h2.5v2h-2.5zM1693 158.5h2.5v2h-2.5z" fill="#7a7a7a"/>
<rect x="1727" y="83" width="28" height="31" fill="#d8a868"/><path d="M1734 84V82.5A2 2 0 0 1 1736 80.5H1739.5A2 2 0 0 1 1743.5 80.5H1747A2 2 0 0 1 1749 82.5V84Z" fill="#eeeeee"/><path d="M1736 91H1752.5L1759.2 97.5V119H1736Z" fill="#dcdcdc"/><path d="M1752.5 91V97.5H1759.2Z" fill="#efefef"/>
<path d="M1740.4 148h6l-3.0 3.6z" fill="#d9d9d9"/>
<path d="M1779 80H1791L1793 82V94H1779Z" fill="#cfcfcf"/><path d="M1782 84H1790M1782 87H1790M1782 90H1788" stroke="#888" stroke-width="0.9"/>
<path d="M1787 88L1797 98M1797 88L1787 98" stroke="#f0f0f0" stroke-width="1.4"/><circle cx="1788" cy="98.5" r="2.5" fill="none" stroke="#f0f0f0" stroke-width="1.2"/><circle cx="1796" cy="98.5" r="2.5" fill="none" stroke="#f0f0f0" stroke-width="1.2"/>
<path d="M1806 89.7h6l-3.0 3.6z" fill="#d9d9d9"/>
<path d="M1780.5 111H1789L1791 113V126H1780.5Z" fill="#bdbdbd"/><path d="M1784 115H1794.5L1798.5 119V131H1784Z" fill="#dcdcdc"/>
<path d="M1806 120.2h6l-3.0 3.6z" fill="#d9d9d9"/>
<path d="M1842 83H1857V98H1882.5V113H1842Z" fill="#d8d8d8"/>
<path d="M1859 146h6.3l-3.15 3.6z" fill="#d9d9d9"/>
<rect x="26.7" y="204.3" width="20.500000000000004" height="2.7" fill="#e2e2e2"/><rect x="26.7" y="210.7" width="20.500000000000004" height="2.7" fill="#e2e2e2"/><rect x="26.7" y="217.1" width="20.500000000000004" height="2.7" fill="#e2e2e2"/>
<path d="M60.5 222L69 202.5" stroke="#4f5663" stroke-width="1.3"/>
<path d="M119.5 227L130 197H220L209.5 227Z" fill="#3b4453"/>
<path d="M196.8 207.2L205.8 216.2M205.8 207.2L196.8 216.2" stroke="#b7bbc1" stroke-width="2.2"/>
<path d="M241.8 203V220.5M233 211.8H250.5" stroke="#e4e4e4" stroke-width="2.4"/>
<path d="M263 222L271.5 202.5" stroke="#4f5663" stroke-width="1.3"/>
<rect x="26.7" y="986.3" width="20.599999999999998" height="2.7" fill="#e2e2e2"/><rect x="26.7" y="992.6" width="20.599999999999998" height="2.7" fill="#e2e2e2"/><rect x="26.7" y="999.2" width="20.599999999999998" height="2.7" fill="#e2e2e2"/>
<path d="M58.3 1008.7L70 979H143.8L132 1008.7Z" fill="#3b4453"/>
<path d="M220.7 1008L228 985" stroke="#4f5663" stroke-width="1.3"/>
<path d="M250.8 986V1003.3M241.7 994.6H260" stroke="#e4e4e4" stroke-width="2.4"/>
<path d="M272.7 1008L280 985" stroke="#4f5663" stroke-width="1.3"/>
<rect x="1135.2" y="981.2" width="58.4" height="29.3" fill="#3b4453"/>
<rect x="1197" y="981.2" width="80.0" height="29.3" fill="#3b4453"/>
<rect x="1280" y="981.2" width="29.7" height="29.3" fill="#3b4453"/>
<rect x="1311.3" y="981.2" width="129.2" height="29.3" fill="#3b4453"/>
<rect x="1442" y="981.2" width="79.4" height="29.3" fill="#3b4453"/>
<rect x="1525.7" y="981.2" width="131.1" height="29.3" fill="#3b4453"/>
<rect x="1660" y="981.2" width="49.6" height="29.3" fill="#3b4453"/>
<rect x="1710.8" y="981.2" width="30.0" height="29.3" fill="#3b4453"/>
<rect x="1744" y="981.2" width="31.0" height="29.3" fill="#3b4453"/>
<rect x="1777.8" y="981.2" width="68.0" height="29.3" fill="#3b4453"/>
<rect x="1848.9" y="981.2" width="27.6" height="29.3" fill="#3b4453"/>
<rect x="1880.7" y="981.2" width="30.3" height="29.3" fill="#3b4453"/>
<rect x="1197.5" y="981.8" width="28.5" height="28" fill="#5f8fc5"/>
<rect x="1342" y="981.8" width="27.7" height="28" fill="#5f8fc5"/>
<rect x="1472.7" y="981.8" width="28.1" height="28" fill="#5f8fc5"/>
<rect x="1525.8" y="981.8" width="28.1" height="28" fill="#5f8fc5"/>
<path d="M1206.4 986V1004.8M1211.4 986V1004.8M1216.4 986V1004.8M1202 990.5H1221M1202 995.5H1221M1202 1000.4H1221" stroke="#f4f4f4" stroke-width="1.8"/>
<rect x="1234" y="988.3" width="3.2" height="3.2" fill="#d6d6d6"/><rect x="1234" y="994.3" width="3.2" height="3.2" fill="#d6d6d6"/><rect x="1234" y="1000.3" width="3.2" height="3.2" fill="#d6d6d6"/><rect x="1240" y="988.3" width="3.2" height="3.2" fill="#d6d6d6"/><rect x="1240" y="994.3" width="3.2" height="3.2" fill="#d6d6d6"/><rect x="1240" y="1000.3" width="3.2" height="3.2" fill="#d6d6d6"/><rect x="1246" y="988.3" width="3.2" height="3.2" fill="#d6d6d6"/><rect x="1246" y="994.3" width="3.2" height="3.2" fill="#d6d6d6"/><rect x="1246" y="1000.3" width="3.2" height="3.2" fill="#d6d6d6"/>
<path d="M1261.7 993.3h10l-5.0 4.5z" fill="#d9d9d9"/>
<path d="M1288.5 987.5V996.5M1284 992H1293" stroke="#bdbdbd" stroke-width="1.3"/><rect x="1290.5" y="997" width="14.5" height="6" rx="1" fill="#d6d6d6"/><rect x="1291.5" y="998" width="2" height="4" fill="#555"/>
<path d="M1316 986.5V1005.3H1336M1316 998.5H1322.5V1005.3" stroke="#c8c8c8" stroke-width="1.3" fill="none"/>
<circle cx="1353.5" cy="997.5" r="7.8" fill="none" stroke="#f4f4f4" stroke-width="1.3"/><path d="M1349 1003L1363 987.5M1353.5 997.5H1366" stroke="#f4f4f4" stroke-width="1.3"/>
<path d="M1376 993.3h10l-5.0 4.5z" fill="#d9d9d9"/>
<path d="M1398 987L1413.5 1005" stroke="#e04848" stroke-width="1.3"/><path d="M1405.5 985.5V1006" stroke="#50c050" stroke-width="1.3"/><rect x="1403.5" y="994" width="4" height="4" fill="#3b4453" stroke="#d8d8d8" stroke-width="1"/>
<path d="M1426 993.3h10l-5.0 4.5z" fill="#d9d9d9"/>
<path d="M1447 1004.5H1467M1448 1004L1466 988.5" stroke="#c8c8c8" stroke-width="1.3"/><rect x="1454.5" y="996" width="3.5" height="3.5" fill="#d8d8d8"/>
<rect x="1479" y="989" width="17.5" height="16" fill="none" stroke="#f4f4f4" stroke-width="1.3"/><rect x="1476" y="986" width="5" height="5" fill="#5f8fc5" stroke="#f4f4f4" stroke-width="1.1"/>
<path d="M1506.7 993.3h10l-5.0 4.5z" fill="#d9d9d9"/>
<path d="M1538.5 986.5L1542.5 998L1547.0 1005L1538.5 1001.5L1530.0 1005L1534.5 998Z" fill="#f4f4f4"/><circle cx="1546.5" cy="989.5" r="3" fill="none" stroke="#f4f4f4" stroke-width="1.2"/>
<path d="M1568 986.5L1572 998L1576.5 1005L1568 1001.5L1559.5 1005L1564 998Z" fill="#cfcfcf"/><path d="M1575 986L1572 991H1575L1572.5 996" stroke="#cfcfcf" stroke-width="1.3" fill="none"/>
<path d="M1599.5 986.5L1603.5 998L1608.0 1005L1599.5 1001.5L1591.0 1005L1595.5 998Z" fill="#cfcfcf"/>
<path d="M1642.7 993.3h9.5l-4.75 4.5z" fill="#d9d9d9"/>
<path d="M1681.97 993.54L1685.31 994.03L1685.31 997.97L1681.97 998.46L1681.73 999.04L1683.74 1001.76L1680.96 1004.54L1678.24 1002.53L1677.66 1002.77L1677.17 1006.11L1673.23 1006.11L1672.74 1002.77L1672.16 1002.53L1669.44 1004.54L1666.66 1001.76L1668.67 999.04L1668.43 998.46L1665.09 997.97L1665.09 994.03L1668.43 993.54L1668.67 992.96L1666.66 990.24L1669.44 987.46L1672.16 989.47L1672.74 989.23L1673.23 985.89L1677.17 985.89L1677.66 989.23L1678.24 989.47L1680.96 987.46L1683.74 990.24L1681.73 992.96Z" fill="#cfcfcf"/><circle cx="1675.2" cy="996" r="3.4" fill="#3b4453"/>
<path d="M1694.6 993.3h10.4l-5.2 4.5z" fill="#d9d9d9"/>
<path d="M1725.2 986V1006M1715.4 996H1735" stroke="#e6e6e6" stroke-width="2.8"/>
<rect x="1749" y="987" width="7.5" height="7.5" fill="none" stroke="#d0d0d0" stroke-width="1.1"/><circle cx="1764" cy="993.5" r="4.8" fill="none" stroke="#d0d0d0" stroke-width="1.1"/><path d="M1756 998L1760.5 1005H1751.5Z" fill="none" stroke="#d0d0d0" stroke-width="1.1"/>
<path d="M1784 984H1800L1806 990V1005H1784Z" fill="#3f7cc8"/><path d="M1791 984V1000M1784 991H1798" stroke="#a8d4f8" stroke-width="1.2"/><circle cx="1791" cy="991" r="2" fill="#e8f4ff"/><rect x="1781.5" y="998" width="11" height="7" fill="#f0b828"/><path d="M1795 1001L1799 1005L1807 996" stroke="#40b050" stroke-width="2.6" fill="none"/>
<rect x="1816" y="986" width="19" height="17.5" fill="#d8d8d8"/><path d="M1817 1000C1820 989 1823 987 1826 994C1829 1001 1832 993 1834 989" stroke="#555" stroke-width="0.9" fill="none"/><path d="M1830 995L1836 1006H1824Z" fill="#f4a060"/><rect x="1829.6" y="999" width="0.9" height="4" fill="#fff"/>
<rect x="1854.3" y="987" width="19" height="16.5" fill="none" stroke="#d6d6d6" stroke-width="1.3"/><path d="M1858 1000L1862 996M1858 996.5V1000H1861.5M1869.5 990.5L1865.5 994.5M1866 990.5H1869.5V994" stroke="#d6d6d6" stroke-width="1.2" fill="none"/>
<rect x="1886" y="987.2" width="20" height="2.6" fill="#e2e2e2"/><rect x="1886" y="994.3" width="20" height="2.6" fill="#e2e2e2"/><rect x="1886" y="1001.7" width="20" height="2.6" fill="#e2e2e2"/>
<path d="M406 974V945A4 4 0 0 1 410 941H478V974Z" fill="#1f2430"/>
<path d="M478 974V944.5A2.5 2.5 0 0 1 480.5 942H1510.5A2.5 2.5 0 0 1 1513 944.5V972A2 2 0 0 1 1511 974H478Z" fill="#b4b4b4"/>
<rect x="411" y="947" width="2" height="2" fill="#cfcfcf"/><rect x="411" y="951" width="2" height="2" fill="#cfcfcf"/><rect x="411" y="955" width="2" height="2" fill="#cfcfcf"/><rect x="411" y="959" width="2" height="2" fill="#cfcfcf"/><rect x="411" y="963" width="2" height="2" fill="#cfcfcf"/><rect x="411" y="966.5" width="2" height="2" fill="#cfcfcf"/><rect x="415" y="947" width="2" height="2" fill="#cfcfcf"/><rect x="415" y="951" width="2" height="2" fill="#cfcfcf"/><rect x="415" y="955" width="2" height="2" fill="#cfcfcf"/><rect x="415" y="959" width="2" height="2" fill="#cfcfcf"/><rect x="415" y="963" width="2" height="2" fill="#cfcfcf"/><rect x="415" y="966.5" width="2" height="2" fill="#cfcfcf"/>
<path d="M426 951L436 961M436 951L426 961" stroke="#cfcfcf" stroke-width="2"/>
<path d="M453.8 965L463.5 955.3" stroke="#a4a4a4" stroke-width="2.8" stroke-linecap="round"/><path d="M468.2 947.6A4.6 4.6 0 1 0 471.6 953.2" stroke="#a4a4a4" stroke-width="2.6" fill="none"/><path d="M466 951.5L470.5 947" stroke="#a4a4a4" stroke-width="1.6"/>
<rect x="483.5" y="950.5" width="19" height="14" fill="#b8b8b8" stroke="#444" stroke-width="1"/><rect x="483.5" y="950.5" width="19" height="3" fill="#444"/><rect x="485" y="951.2" width="1.4" height="1.4" fill="#ddd"/><path d="M485.5 956.5L488.5 958.5L485.5 960.5M489.5 961H493" stroke="#444" stroke-width="0.9" fill="none"/>
<path d="M505 955.5h10l-5.0 5.5z" fill="#444"/>
<path d="M1497.3 961.7H1507.3L1502.3 956Z" fill="#3a3a3a"/>
<rect x="869" y="942.5" width="2" height="31.5" fill="#ececec"/>
<rect x="969" y="942.5" width="2" height="31.5" fill="#ececec"/>
<rect x="1069" y="942.5" width="1" height="31.5" fill="#c8c8c8"/><rect x="1070" y="942.5" width="1" height="31.5" fill="#f2f2f2"/>
<rect x="1169" y="942.5" width="1" height="31.5" fill="#c8c8c8"/><rect x="1170" y="942.5" width="1" height="31.5" fill="#f2f2f2"/>
<rect x="1370" y="942" width="1" height="32" fill="#a8a8a8"/>
<text x="423" y="27" textLength="36" lengthAdjust="spacingAndGlyphs" font-size="15" font-weight="normal" font-style="normal" fill="#8ccaf2" font-family='"Liberation Sans", sans-serif'>Share</text>
<text x="650.5" y="26" textLength="163.5" lengthAdjust="spacingAndGlyphs" font-size="14.5" font-weight="normal" font-style="normal" fill="#eceef1" font-family='"Liberation Sans", sans-serif'>Autodesk AutoCAD 2024</text>
<text x="831" y="26" textLength="65" lengthAdjust="spacingAndGlyphs" font-size="14.5" font-weight="normal" font-style="normal" fill="#eceef1" font-family='"Liberation Sans", sans-serif'>rd 2B.dwg</text>
<text x="1101.5" y="26" textLength="151" lengthAdjust="spacingAndGlyphs" font-size="13.5" font-weight="normal" font-style="italic" fill="#a9adb5" font-family='"Liberation Sans", sans-serif'>Type a keyword or phrase</text>
<text x="1383" y="26.5" textLength="106" lengthAdjust="spacingAndGlyphs" font-size="14.5" font-weight="normal" font-style="normal" fill="#eceef1" font-family='"Liberation Sans", sans-serif'>carolina.roque...</text>
<text x="22" y="63" textLength="41" lengthAdjust="spacingAndGlyphs" font-size="14.5" font-weight="normal" font-style="normal" fill="#f2f3f5" font-family='"Liberation Sans", sans-serif'>Home</text>
<text x="88" y="63" textLength="36" lengthAdjust="spacingAndGlyphs" font-size="14.5" font-weight="normal" font-style="normal" fill="#d4d8de" font-family='"Liberation Sans", sans-serif'>Insert</text>
<text x="148" y="63" textLength="61" lengthAdjust="spacingAndGlyphs" font-size="14.5" font-weight="normal" font-style="normal" fill="#d4d8de" font-family='"Liberation Sans", sans-serif'>Annotate</text>
<text x="234" y="63" textLength="32" lengthAdjust="spacingAndGlyphs" font-size="14.5" font-weight="normal" font-style="normal" fill="#d4d8de" font-family='"Liberation Sans", sans-serif'>View</text>
<text x="290" y="63" textLength="54" lengthAdjust="spacingAndGlyphs" font-size="14.5" font-weight="normal" font-style="normal" fill="#d4d8de" font-family='"Liberation Sans", sans-serif'>Manage</text>
<text x="368" y="63" textLength="46" lengthAdjust="spacingAndGlyphs" font-size="14.5" font-weight="normal" font-style="normal" fill="#d4d8de" font-family='"Liberation Sans", sans-serif'>Output</text>
<text x="438" y="63" textLength="52" lengthAdjust="spacingAndGlyphs" font-size="14.5" font-weight="normal" font-style="normal" fill="#d4d8de" font-family='"Liberation Sans", sans-serif'>Add-ins</text>
<text x="514" y="63" textLength="78" lengthAdjust="spacingAndGlyphs" font-size="14.5" font-weight="normal" font-style="normal" fill="#d4d8de" font-family='"Liberation Sans", sans-serif'>Collaborate</text>
<text x="616" y="63" textLength="88" lengthAdjust="spacingAndGlyphs" font-size="14.5" font-weight="normal" font-style="normal" fill="#d4d8de" font-family='"Liberation Sans", sans-serif'>Express Tools</text>
<text x="728" y="63" textLength="96" lengthAdjust="spacingAndGlyphs" font-size="14.5" font-weight="normal" font-style="normal" fill="#d4d8de" font-family='"Liberation Sans", sans-serif'>Featured Apps</text>
<text x="21.6" y="137.8" textLength="26.2" lengthAdjust="spacingAndGlyphs" font-size="14.5" font-weight="normal" font-style="normal" fill="#e8eaee" font-family='"Liberation Sans", sans-serif'>Line</text>
<text x="62.7" y="137.8" textLength="50.1" lengthAdjust="spacingAndGlyphs" font-size="14.5" font-weight="normal" font-style="normal" fill="#e8eaee" font-family='"Liberation Sans", sans-serif'>Polyline</text>
<text x="131.7" y="137.8" textLength="36.3" lengthAdjust="spacingAndGlyphs" font-size="14.5" font-weight="normal" font-style="normal" fill="#e8eaee" font-family='"Liberation Sans", sans-serif'>Circle</text>
<text x="195.2" y="137.8" textLength="21.8" lengthAdjust="spacingAndGlyphs" font-size="14.5" font-weight="normal" font-style="normal" fill="#e8eaee" font-family='"Liberation Sans", sans-serif'>Arc</text>
<text x="319.5" y="96.2" textLength="36.3" lengthAdjust="spacingAndGlyphs" font-size="14.5" font-weight="normal" font-style="normal" fill="#e8eaee" font-family='"Liberation Sans", sans-serif'>Move</text>
<text x="411" y="96.2" textLength="44" lengthAdjust="spacingAndGlyphs" font-size="14.5" font-weight="normal" font-style="normal" fill="#e8eaee" font-family='"Liberation Sans", sans-serif'>Rotate</text>
<text x="498.3" y="96.2" textLength="28" lengthAdjust="spacingAndGlyphs" font-size="14.5" font-weight="normal" font-style="normal" fill="#e8eaee" font-family='"Liberation Sans", sans-serif'>Trim</text>
<text x="320" y="127" textLength="33.8" lengthAdjust="spacingAndGlyphs" font-size="14.5" font-weight="normal" font-style="normal" fill="#e8eaee" font-family='"Liberation Sans", sans-serif'>Copy</text>
<text x="410.3" y="127" textLength="40.5" lengthAdjust="spacingAndGlyphs" font-size="14.5" font-weight="normal" font-style="normal" fill="#e8eaee" font-family='"Liberation Sans", sans-serif'>Mirror</text>
<text x="499" y="127" textLength="32" lengthAdjust="spacingAndGlyphs" font-size="14.5" font-weight="normal" font-style="normal" fill="#e8eaee" font-family='"Liberation Sans", sans-serif'>Fillet</text>
<text x="320.5" y="157.8" textLength="45.3" lengthAdjust="spacingAndGlyphs" font-size="14.5" font-weight="normal" font-style="normal" fill="#e8eaee" font-family='"Liberation Sans", sans-serif'>Stretch</text>
<text x="410.3" y="157.8" textLength="34.2" lengthAdjust="spacingAndGlyphs" font-size="14.5" font-weight="normal" font-style="normal" fill="#e8eaee" font-family='"Liberation Sans", sans-serif'>Scale</text>
<text x="498.3" y="157.8" textLength="34.7" lengthAdjust="spacingAndGlyphs" font-size="14.5" font-weight="normal" font-style="normal" fill="#e8eaee" font-family='"Liberation Sans", sans-serif'>Array</text>
<text x="619" y="138.3" textLength="26" lengthAdjust="spacingAndGlyphs" font-size="14.5" font-weight="normal" font-style="normal" fill="#e8eaee" font-family='"Liberation Sans", sans-serif'>Text</text>
<text x="662" y="138" textLength="69.8" lengthAdjust="spacingAndGlyphs" font-size="14.5" font-weight="normal" font-style="normal" fill="#e8eaee" font-family='"Liberation Sans", sans-serif'>Dimension</text>
<text x="807.5" y="138.2" textLength="34.7" lengthAdjust="spacingAndGlyphs" font-size="14.5" font-weight="normal" font-style="normal" fill="#e8eaee" font-family='"Liberation Sans", sans-serif'>Layer</text>
<text x="791.8" y="158" textLength="66" lengthAdjust="spacingAndGlyphs" font-size="14.5" font-weight="normal" font-style="normal" fill="#e8eaee" font-family='"Liberation Sans", sans-serif'>Properties</text>
<text x="966.6" y="95.7" textLength="45.3" lengthAdjust="spacingAndGlyphs" font-size="14.5" font-weight="normal" font-style="normal" fill="#e8eaee" font-family='"Liberation Sans", sans-serif'>pontos</text>
<text x="1135" y="136.8" textLength="35.5" lengthAdjust="spacingAndGlyphs" font-size="14.5" font-weight="normal" font-style="normal" fill="#e8eaee" font-family='"Liberation Sans", sans-serif'>Insert</text>
<text x="1245.5" y="138" textLength="40" lengthAdjust="spacingAndGlyphs" font-size="14.5" font-weight="normal" font-style="normal" fill="#e8eaee" font-family='"Liberation Sans", sans-serif'>Match</text>
<text x="1232.5" y="158" textLength="66.25" lengthAdjust="spacingAndGlyphs" font-size="14.5" font-weight="normal" font-style="normal" fill="#e8eaee" font-family='"Liberation Sans", sans-serif'>Properties</text>
<text x="1363" y="96" textLength="50.75" lengthAdjust="spacingAndGlyphs" font-size="14.5" font-weight="normal" font-style="normal" fill="#e8eaee" font-family='"Liberation Sans", sans-serif'>ByLayer</text>
<text x="1421" y="127.4" textLength="49.7" lengthAdjust="spacingAndGlyphs" font-size="14.5" font-weight="normal" font-style="normal" fill="#e8eaee" font-family='"Liberation Sans", sans-serif'>ByLayer</text>
<text x="1421" y="158" textLength="49.7" lengthAdjust="spacingAndGlyphs" font-size="14.5" font-weight="normal" font-style="normal" fill="#e8eaee" font-family='"Liberation Sans", sans-serif'>ByLayer</text>
<text x="1509.7" y="137.6" textLength="39.6" lengthAdjust="spacingAndGlyphs" font-size="14.5" font-weight="normal" font-style="normal" fill="#e8eaee" font-family='"Liberation Sans", sans-serif'>Group</text>
<text x="1605" y="138.6" textLength="55.6" lengthAdjust="spacingAndGlyphs" font-size="14.5" font-weight="normal" font-style="normal" fill="#e8eaee" font-family='"Liberation Sans", sans-serif'>Measure</text>
<text x="1726.4" y="139.2" textLength="33" lengthAdjust="spacingAndGlyphs" font-size="14.5" font-weight="normal" font-style="normal" fill="#e8eaee" font-family='"Liberation Sans", sans-serif'>Paste</text>
<text x="1846.5" y="138.7" textLength="30" lengthAdjust="spacingAndGlyphs" font-size="14.5" font-weight="normal" font-style="normal" fill="#e8eaee" font-family='"Liberation Sans", sans-serif'>Base</text>
<text x="121" y="188" textLength="35" lengthAdjust="spacingAndGlyphs" font-size="14.5" font-weight="normal" font-style="normal" fill="#e8eaee" font-family='"Liberation Sans", sans-serif'>Draw</text>
<text x="411" y="188" textLength="47" lengthAdjust="spacingAndGlyphs" font-size="14.5" font-weight="normal" font-style="normal" fill="#e8eaee" font-family='"Liberation Sans", sans-serif'>Modify</text>
<text x="647" y="188" textLength="74" lengthAdjust="spacingAndGlyphs" font-size="14.5" font-weight="normal" font-style="normal" fill="#e8eaee" font-family='"Liberation Sans", sans-serif'>Annotation</text>
<text x="927" y="188" textLength="41" lengthAdjust="spacingAndGlyphs" font-size="14.5" font-weight="normal" font-style="normal" fill="#e8eaee" font-family='"Liberation Sans", sans-serif'>Layers</text>
<text x="1149" y="188" textLength="36" lengthAdjust="spacingAndGlyphs" font-size="14.5" font-weight="normal" font-style="normal" fill="#e8eaee" font-family='"Liberation Sans", sans-serif'>Block</text>
<text x="1315" y="188" textLength="67" lengthAdjust="spacingAndGlyphs" font-size="14.5" font-weight="normal" font-style="normal" fill="#e8eaee" font-family='"Liberation Sans", sans-serif'>Properties</text>
<text x="1514" y="188" textLength="47" lengthAdjust="spacingAndGlyphs" font-size="14.5" font-weight="normal" font-style="normal" fill="#e8eaee" font-family='"Liberation Sans", sans-serif'>Groups</text>
<text x="1615" y="188" textLength="50" lengthAdjust="spacingAndGlyphs" font-size="14.5" font-weight="normal" font-style="normal" fill="#e8eaee" font-family='"Liberation Sans", sans-serif'>Utilities</text>
<text x="1733" y="188" textLength="65" lengthAdjust="spacingAndGlyphs" font-size="14.5" font-weight="normal" font-style="normal" fill="#e8eaee" font-family='"Liberation Sans", sans-serif'>Clipboard</text>
<text x="1829" y="188" textLength="31" lengthAdjust="spacingAndGlyphs" font-size="14.5" font-weight="normal" font-style="normal" fill="#e8eaee" font-family='"Liberation Sans", sans-serif'>View</text>
<text x="79.5" y="217.9" textLength="30.5" lengthAdjust="spacingAndGlyphs" font-size="14.5" font-weight="normal" font-style="normal" fill="#e6e8ec" font-family='"Liberation Sans", sans-serif'>Start</text>
<text x="140" y="217.9" textLength="44.5" lengthAdjust="spacingAndGlyphs" font-size="14.5" font-weight="bold" font-style="normal" fill="#f4f5f7" font-family='"Liberation Sans", sans-serif'>rd 2B*</text>
<text x="10.8" y="253.2" textLength="154.5" lengthAdjust="spacingAndGlyphs" font-size="14" font-weight="normal" font-style="normal" fill="#e4e4e4" font-family='"Liberation Sans", sans-serif'>[−][Top][2D Wireframe]</text>
<text x="524" y="963" textLength="124" lengthAdjust="spacingAndGlyphs" font-size="14.5" font-weight="normal" font-style="italic" fill="#5e5e5e" font-family='"Liberation Mono", monospace'>Type a command</text>
<text x="79.3" y="1000" textLength="43.4" lengthAdjust="spacingAndGlyphs" font-size="14.5" font-weight="bold" font-style="normal" fill="#f4f5f7" font-family='"Liberation Sans", sans-serif'>Model</text>
<text x="153.3" y="1000" textLength="55" lengthAdjust="spacingAndGlyphs" font-size="14.5" font-weight="normal" font-style="normal" fill="#e6e8ec" font-family='"Liberation Sans", sans-serif'>folha A3</text>
<text x="1139.4" y="1002" textLength="50" lengthAdjust="spacingAndGlyphs" font-size="14.5" font-weight="normal" font-style="normal" fill="#eceef1" font-family='"Liberation Sans", sans-serif'>MODEL</text>
<text x="1620.8" y="1001.6" textLength="15.6" lengthAdjust="spacingAndGlyphs" font-size="14.5" font-weight="normal" font-style="normal" fill="#eceef1" font-family='"Liberation Sans", sans-serif'>1:1</text>
</svg>
<svg width="1919" height="1017" style="position:absolute;left:0;top:0">
<g font-family="Liberation Sans, sans-serif" font-weight="bold" fill="#a9a9a9">
<text x="1819.8" y="296.5" font-size="22" textLength="14.2" lengthAdjust="spacingAndGlyphs">N</text>
<text x="1758" y="354.8" font-size="22" textLength="21.5" lengthAdjust="spacingAndGlyphs">W</text>
<text x="1878.3" y="354.8" font-size="22" textLength="14" lengthAdjust="spacingAndGlyphs">E</text>
<text x="1820" y="413" font-size="22" textLength="14" lengthAdjust="spacingAndGlyphs">S</text>
<text x="1816" y="351.4" font-size="15" textLength="22.2" lengthAdjust="spacingAndGlyphs" fill="#4b4e56">TOP</text>
</g>
<rect x="1786.5" y="438" width="80.5" height="19" rx="5" fill="#7d8089" stroke="#8e919a" stroke-width="1"/>
<text x="1790.5" y="452" font-size="12.5" font-family="Liberation Sans, sans-serif" fill="#50535b" textLength="50" lengthAdjust="spacingAndGlyphs">Unnamed</text>
<path d="M1850 445H1860L1855 450Z" fill="#9a9da5"/>
</svg>

</body></html>
